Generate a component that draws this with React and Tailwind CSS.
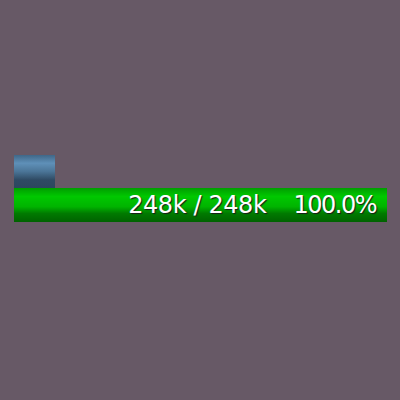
export default function App() {
  return (
    <div className="w-[400px] h-[400px] bg-[#675966] flex flex-col pl-[14px] pt-[155px]">
      <div className="w-[41px] h-[33px] bg-[linear-gradient(to_bottom,#3f6788_0%,#5f90b8_25%,#4b7597_50%,#2f4b64_75%,#2c475e_100%)]" />
      <div className="w-[373px] h-[34px] flex items-center justify-end pr-[10px] bg-[linear-gradient(to_bottom,#009d00_0%,#00c800_25%,#00b400_55%,#007a00_75%,#006200_100%)]">
        <span
          className="text-white text-[24px] leading-none whitespace-pre [text-shadow:1px_1px_1px_#1a1a1a] flex"
          style={{ fontFamily: '"DejaVu Sans", sans-serif' }}
        >
          <span className="tracking-[-0.4px]">248k / 248k</span>
          <span className="ml-[27px] tracking-[-1.5px] mr-[1px]">100.0%</span>
        </span>
      </div>
    </div>
  );
}
